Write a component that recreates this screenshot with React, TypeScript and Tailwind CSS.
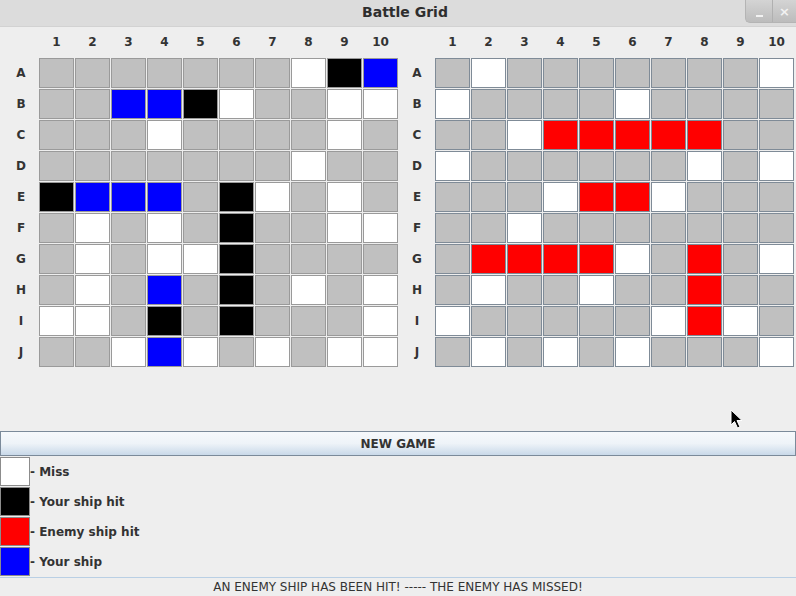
import React from 'react';

const cols = ['1', '2', '3', '4', '5', '6', '7', '8', '9', '10'];
const rows = ['A', 'B', 'C', 'D', 'E', 'F', 'G', 'H', 'I', 'J'];

// g = unknown, W = miss, K = your ship hit, B = your ship, R = enemy ship hit
const myBoard = [
  'gggggggWKB',
  'ggBBKWggWW',
  'gggWggggWg',
  'gggggggWgg',
  'KBBBgKWgWg',
  'gWgWgKggWW',
  'gWgWWKgggg',
  'gWgBgKgWgW',
  'WWgKgKgggW',
  'ggWBWgWgWW',
];

const enemyBoard = [
  'gWgggggggW',
  'WggggWgggg',
  'ggWRRRRRgg',
  'WggggggWgW',
  'gggWRRWggg',
  'ggWggggggg',
  'gRRRRWgRgW',
  'gWggWggRgg',
  'WgggggWRWg',
  'gWgWgWgggW',
];

const fill: Record<string, string> = {
  g: 'bg-[#c0c0c0]',
  W: 'bg-white',
  K: 'bg-black',
  B: 'bg-[#0000ff]',
  R: 'bg-[#ff0000]',
};

const legend = [
  { color: 'bg-white', label: '- Miss' },
  { color: 'bg-black', label: '- Your ship hit' },
  { color: 'bg-[#ff0000]', label: '- Enemy ship hit' },
  { color: 'bg-[#0000ff]', label: '- Your ship' },
];

function Board({ data, edge }: { data: string[]; edge: string }) {
  return (
    <div className="grid grid-cols-[repeat(11,36px)] grid-rows-[repeat(11,31px)] text-[12px] font-bold text-[#333]">
      <div />
      {cols.map((c) => (
        <div key={c} className="flex items-center justify-center pr-px">
          {c}
        </div>
      ))}
      {rows.map((r, i) => (
        <React.Fragment key={r}>
          <div className="flex items-center justify-center">{r}</div>
          {data[i].split('').map((v, j) => (
            <div key={j} className={`w-[35px] h-[30px] border ${edge} ${fill[v]}`} />
          ))}
        </React.Fragment>
      ))}
    </div>
  );
}

export default function App() {
  return (
    <div className="relative w-[796px] h-[596px] flex flex-col bg-[#eeeeee] font-['DejaVu_Sans',sans-serif] text-[#333] overflow-hidden">
      {/* title bar */}
      <div className="relative h-[27px] flex items-center justify-center bg-[#dcdcdc] border-b border-[#d2d2d2] pl-[14px]">
        <span className="text-[14px] font-bold text-[#2e2e2e]">Battle Grid</span>
        <div className="absolute right-0 top-0 h-[23px] flex rounded-bl-[5px] overflow-hidden border-l border-b border-[#b4b4b4] bg-linear-to-b from-[#d4d4d4] to-[#bcbcbc]">
          <div className="w-[27px] flex items-end justify-center pb-[5px] border-r border-[#b0b0b0]">
            <div className="w-[7px] h-[2px] bg-[#f2f2f2]" />
          </div>
          <div className="w-[23px] flex items-center justify-center text-[#f2f2f2] text-[13px] font-bold leading-none">
            ×
          </div>
        </div>
      </div>

      {/* boards */}
      <div className="h-[405px] flex items-start pl-[3px]">
        <Board data={myBoard} edge="border-[#9a9a9a]" />
        <Board data={enemyBoard} edge="border-[#7f8b97]" />
      </div>

      {/* new game */}
      <button className="h-[25px] w-full flex items-center justify-center border border-[#7b8a9a] bg-linear-to-b from-[#f6f9fc] via-[#eef3f8] to-[#c9d9e9] text-[12px] font-bold text-[#333]">
        NEW GAME
      </button>

      {/* legend */}
      <div className="flex flex-col pt-px">
        {legend.map((l) => (
          <div key={l.label} className="h-[30px] flex items-start">
            <div className={`w-[30px] h-[29px] border border-[#8c8c8c] ${l.color}`} />
            <span className="h-[29px] flex items-center text-[12px] font-bold text-[#333]">{l.label}</span>
          </div>
        ))}
      </div>

      {/* status */}
      <div className="flex-1 flex items-center justify-center border-t border-[#b9cfe4] text-[12px] text-[#333]">
        AN ENEMY SHIP HAS BEEN HIT! ----- THE ENEMY HAS MISSED!
      </div>

      {/* mouse pointer */}
      <svg className="absolute left-[730px] top-[409px]" width="14" height="21" viewBox="0 0 14 21">
        <path d="M1 1 L1 16 L4.5 12.5 L7.5 19 L10 18 L7 11.5 L12 11.5 Z" fill="#000" stroke="#fff" strokeWidth="1" strokeLinejoin="round" />
      </svg>
    </div>
  );
}
